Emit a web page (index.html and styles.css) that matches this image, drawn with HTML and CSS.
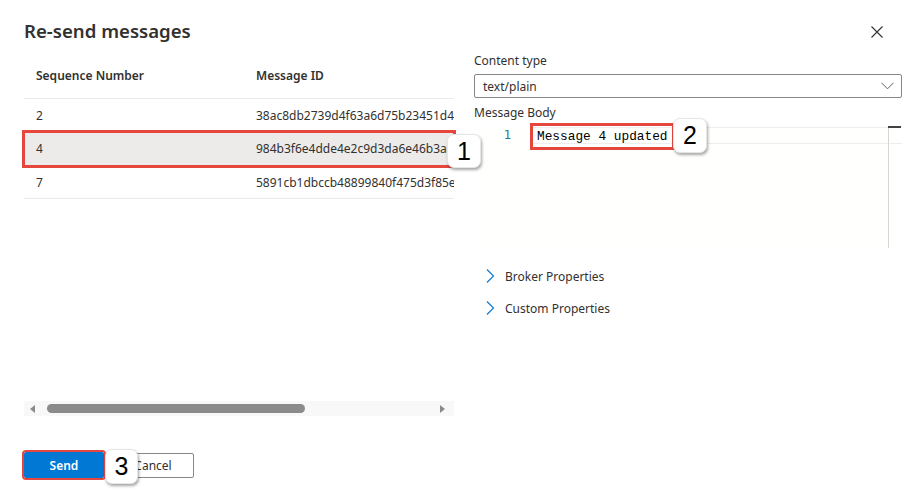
FILE: index.html
```html
<!DOCTYPE html>
<html>
<head>
<meta charset="utf-8">
<link rel="stylesheet" href="styles.css">
</head>
<body>
<div class="dialog">
  <div class="header">
    <h1 class="title">Re-send messages</h1>
    <button class="close" aria-label="Close">
      <svg width="12" height="12" viewBox="0 0 12 12"><path d="M0.5 0.5L11.5 11.5M11.5 0.5L0.5 11.5" stroke="#323130" stroke-width="1.1" fill="none"/></svg>
    </button>
  </div>
  <div class="body">
    <div class="left">
      <div class="table">
        <div class="row head">
          <div class="c1">Sequence Number</div>
          <div class="c2">Message ID</div>
        </div>
        <div class="row">
          <div class="c1">2</div>
          <div class="c2">38ac8db2739d4f63a6d75b23451d4e7a</div>
        </div>
        <div class="row selected">
          <div class="c1">4</div>
          <div class="c2">984b3f6e4dde4e2c9d3da6e46b3a8c21</div>
          <div class="callout callout-1">1</div>
        </div>
        <div class="row">
          <div class="c1">7</div>
          <div class="c2">5891cb1dbccb48899840f475d3f85e02</div>
        </div>
      </div>
      <div class="spacer"></div>
      <div class="hscroll">
        <svg class="arrow" width="6" height="8" viewBox="0 0 6 8"><path d="M5 0L0 4L5 8Z" fill="#8a8a8a"/></svg>
        <div class="track"><div class="thumb"></div></div>
        <svg class="arrow" width="6" height="8" viewBox="0 0 6 8"><path d="M1 0L6 4L1 8Z" fill="#8a8a8a"/></svg>
      </div>
    </div>
    <div class="right">
      <label class="label">Content type</label>
      <div class="select">
        <span>text/plain</span>
        <svg width="13" height="8" viewBox="0 0 13 8"><path d="M0.5 0.8L6.5 6.8L12.5 0.8" stroke="#605e5c" stroke-width="1" fill="none"/></svg>
      </div>
      <label class="label body-label">Message Body</label>
      <div class="editor">
        <div class="gutter">1</div>
        <div class="lines">
          <div class="current-line">
            <span class="code">Message 4 updated</span>
            <div class="callout callout-2">2</div>
          </div>
        </div>
        <div class="ruler"></div>
      </div>
      <div class="expander first">
        <svg width="9" height="14" viewBox="0 0 9 14"><path d="M1 0.5L7.5 7L1 13.5" stroke="#0078d4" stroke-width="1.1" fill="none"/></svg>
        <span>Broker Properties</span>
      </div>
      <div class="expander">
        <svg width="9" height="14" viewBox="0 0 9 14"><path d="M1 0.5L7.5 7L1 13.5" stroke="#0078d4" stroke-width="1.1" fill="none"/></svg>
        <span>Custom Properties</span>
      </div>
    </div>
  </div>
  <div class="footer">
    <button class="btn primary">Send</button>
    <button class="btn secondary">Cancel</button>
    <div class="callout callout-3">3</div>
  </div>
</div>
</body>
</html>
```
FILE: styles.css
```css
* { box-sizing: border-box; }
html, body {
  margin: 0;
  padding: 0;
  background: #ffffff;
  width: 906px;
  height: 490px;
  overflow: hidden;
}
body {
  font-family: "Noto Sans", "Open Sans", sans-serif;
  font-size: 12px;
  color: #323130;
}
.dialog {
  position: relative;
  height: 490px;
  padding: 0 4px 0 24px;
  display: flex;
  flex-direction: column;
}
.header {
  display: flex;
  justify-content: space-between;
  padding-top: 17px;
  height: 52px;
  align-items: flex-start;
}
.title {
  margin: 0;
  font-size: 18.6px;
  font-weight: 600;
  line-height: 28px;
  color: #323130;
}
.close {
  border: 0;
  background: none;
  padding: 0;
  margin: 9px 19px 0 0;
  width: 12px;
  height: 12px;
  display: flex;
}
.body {
  display: flex;
  gap: 20px;
  height: 365px;
}
.left {
  width: 430px;
  display: flex;
  flex-direction: column;
}
.table {
  display: flex;
  flex-direction: column;
}
.row {
  position: relative;
  display: flex;
  align-items: center;
  height: 33px;
  border-bottom: 1px solid #edebe9;
  white-space: nowrap;
}
.row.head {
  height: 47px;
  font-weight: 600;
  padding-top: 1px;
}
.row.selected {
  background: #edebe9;
  outline: 3px solid #e5473f;
  outline-offset: -1px;
  height: 34px;
  z-index: 1;
}
.c1 {
  width: 232px;
  padding-left: 12px;
  flex: none;
}
.c2 {
  flex: 1;
  overflow: hidden;
  text-overflow: clip;
}
.spacer { flex: 1; }
.hscroll {
  height: 15px;
  background: #f8f8f8;
  display: flex;
  align-items: center;
  padding: 0 9px 0 6px;
  gap: 11px;
  margin-bottom: 1px;
}
.arrow { flex: none; }
.track {
  flex: 1;
  height: 9px;
  display: flex;
}
.thumb {
  width: 258px;
  height: 9px;
  border-radius: 5px;
  background: #8b8b8b;
}
.right {
  flex: 1;
  display: flex;
  flex-direction: column;
}
.label {
  display: block;
  line-height: 18px;
  height: 18px;
  margin-bottom: 4px;
}
.select {
  height: 24px;
  border: 1px solid #8a8886;
  border-radius: 2px;
  display: flex;
  align-items: center;
  justify-content: space-between;
  padding: 0 7px 0 8px;
}
.body-label {
  margin-top: 6px;
  margin-bottom: 4px;
}
.editor {
  position: relative;
  height: 122px;
  display: flex;
  background: #fffffe;
}
.gutter {
  width: 37px;
  text-align: right;
  color: #237893;
  font-family: "DejaVu Sans Mono", "Liberation Mono", monospace;
  font-size: 12px;
  line-height: 18px;
}
.lines {
  flex: 1;
  padding-left: 22px;
  position: relative;
}
.current-line {
  position: relative;
  height: 17px;
  margin-top: 1px;
  border-top: 1px solid #eeeeee;
  border-bottom: 1px solid #eeeeee;
  display: flex;
  align-items: center;
}
.code {
  font-family: "Liberation Mono", "DejaVu Sans Mono", monospace;
  font-size: 12.8px;
  color: #000000;
  outline: 3px solid #e5473f;
  outline-offset: 3px;
  line-height: 15px;
  padding: 0 1px;
  margin-left: 3px;
  margin-top: 2px;
}
.ruler {
  position: absolute;
  right: 13px;
  top: 0;
  bottom: 0;
  width: 1px;
  background: #d6d6d6;
}
.ruler::before {
  content: "";
  position: absolute;
  left: 0;
  top: 0;
  width: 13px;
  height: 2px;
  background: #424242;
}
.expander {
  display: flex;
  align-items: center;
  height: 32px;
  gap: 10px;
  padding-left: 12px;
}
.expander svg { flex: none; }
.expander.first { margin-top: 12px; }
.footer {
  position: relative;
  display: flex;
  gap: 8px;
  margin-top: 35px;
}
.btn {
  height: 26px;
  font-family: inherit;
  font-size: 12px;
  border-radius: 2px;
  padding: 0;
}
.primary {
  width: 80px;
  background: #0078d4;
  color: #ffffff;
  font-weight: 600;
  border: 1px solid #0078d4;
  outline: 2px solid #e5473f;
  outline-offset: 0;
}
.secondary {
  width: 82px;
  background: #ffffff;
  color: #323130;
  border: 1px solid #8a8886;
  height: 25px;
  margin-top: 1px;
}
.callout {
  position: absolute;
  width: 34px;
  height: 34px;
  background: #ffffff;
  border-radius: 7px;
  box-shadow: 1px 2px 3px rgba(0,0,0,0.35);
  border: 1px solid #e6e6e6;
  font-family: "Liberation Sans", Arial, sans-serif;
  font-size: 25px;
  line-height: 33px;
  text-align: center;
  color: #000000;
  z-index: 5;
  font-weight: 400;
}
.callout-1 { left: 423px; top: 2px; }
.callout-2 { left: 140px; top: -10px; height: 35px; }
.callout-3 { left: 81px; top: -3px; width: 33px; height: 35px; }
```
